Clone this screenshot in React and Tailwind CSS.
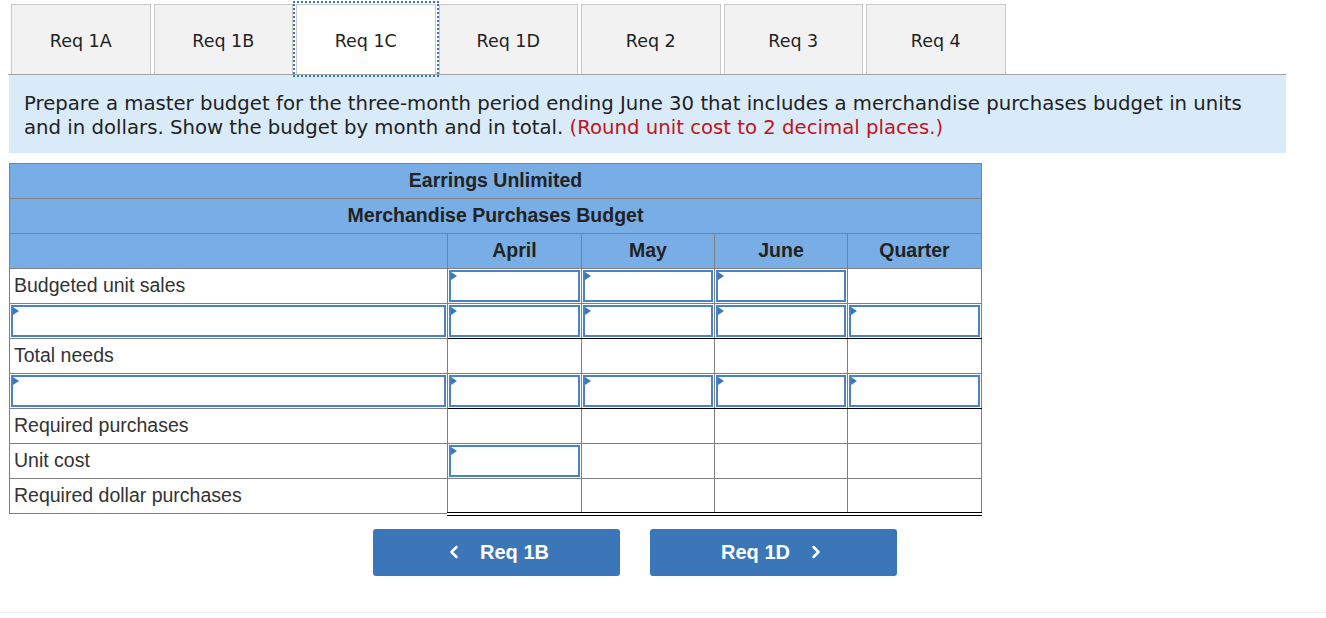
import React from 'react';
import { ChevronLeft, ChevronRight } from 'lucide-react';

const tabs = ['Req 1A', 'Req 1B', 'Req 1C', 'Req 1D', 'Req 2', 'Req 3', 'Req 4'];

const InputCell = () => (
    <div className="relative m-px h-[32px] border-2 border-[#4a82c8] bg-white">
        <span className="absolute left-0 top-0 h-0 w-0 border-y-[4px] border-l-[6px] border-y-transparent border-l-[#3b76c0]" />
    </div>
);

// cells: 'i' = input box, '' = plain; dark = black rule under the row
const rows = [
    { label: 'Budgeted unit sales', cells: ['i', 'i', 'i', ''] },
    { label: null, cells: ['i', 'i', 'i', 'i'], dark: true },
    { label: 'Total needs', cells: ['', '', '', ''] },
    { label: null, cells: ['i', 'i', 'i', 'i'], dark: true },
    { label: 'Required purchases', cells: ['', '', '', ''] },
    { label: 'Unit cost', cells: ['i', '', '', ''], dark: true },
    { label: 'Required dollar purchases', cells: ['', '', '', ''], last: true },
];

const App = () => {
    return (
        <div className="relative h-[618px] w-[1326px] bg-white font-['DejaVu_Sans',Verdana,sans-serif]">
            {/* Tabs */}
            <div className="ml-[8px] flex w-[1278px] gap-[3px] border-b border-[#a3a3a3] pl-[3px] pt-[4px]">
                {tabs.map((t) => (
                    <div
                        key={t}
                        className={
                            t === 'Req 1C'
                                ? 'flex h-[70px] w-[139.5px] items-center justify-center border border-b-0 border-[#c8c8c8] bg-white pt-[3px] text-[17.5px] text-[#222] outline-2 outline-offset-1 outline-dotted outline-[#3b76c0]'
                                : 'flex h-[70px] w-[139.5px] items-center justify-center border border-b-0 border-[#c8c8c8] bg-[#f2f2f2] pt-[3px] text-[17.5px] text-[#222]'
                        }
                    >
                        {t}
                    </div>
                ))}
            </div>

            {/* Instructions */}
            <div className="ml-[9px] w-[1277px] bg-[#d9ebf9] px-[15px] pb-[13px] pt-[17px] text-[19.7px] leading-[24px] text-[#222]">
                Prepare a master budget for the three-month period ending June 30 that includes a merchandise purchases budget in units
                <br />
                and in dollars. Show the budget by month and in total.{' '}
                <span className="text-[#c0131b]">(Round unit cost to 2 decimal places.)</span>
            </div>

            {/* Budget table */}
            <table className="ml-[9px] mt-[10px] w-[972px] table-fixed border-collapse font-['Liberation_Sans',Arial,sans-serif] text-[19.5px]">
                <colgroup>
                    <col className="w-[438px]" />
                    <col className="w-[134px]" />
                    <col className="w-[133px]" />
                    <col className="w-[133px]" />
                    <col className="w-[134px]" />
                </colgroup>
                <thead>
                    <tr className="h-[35px] bg-[#78ade5]">
                        <th colSpan={5} className="border border-[#808080] p-0 font-bold text-[#222]">Earrings Unlimited</th>
                    </tr>
                    <tr className="h-[35px] bg-[#78ade5]">
                        <th colSpan={5} className="border border-[#808080] p-0 font-bold text-[#222]">Merchandise Purchases Budget</th>
                    </tr>
                    <tr className="h-[35px] bg-[#78ade5]">
                        <th className="border border-[#808080] p-0" />
                        <th className="border border-[#808080] p-0 font-bold text-[#222]">April</th>
                        <th className="border border-[#808080] p-0 font-bold text-[#222]">May</th>
                        <th className="border border-[#808080] p-0 font-bold text-[#222]">June</th>
                        <th className="border border-[#808080] p-0 font-bold text-[#222]">Quarter</th>
                    </tr>
                </thead>
                <tbody>
                    {rows.map((r, i) => (
                        <tr key={i} className="h-[35px]">
                            <td className="border border-[#808080] p-0 text-left leading-none text-[#333]">
                                {r.label === null ? <InputCell /> : <span className="pl-[4px]">{r.label}</span>}
                            </td>
                            {r.cells.map((c, j) => (
                                <td
                                    key={j}
                                    className={
                                        r.last
                                            ? 'border border-b-[4px] border-[#808080] border-b-black border-double p-0'
                                            : r.dark
                                            ? 'border border-[#808080] border-b-black p-0'
                                            : 'border border-[#808080] p-0'
                                    }
                                >
                                    {c === 'i' ? <InputCell /> : null}
                                </td>
                            ))}
                        </tr>
                    ))}
                </tbody>
            </table>

            {/* Navigation */}
            <div className="ml-[373px] mt-[13px] flex gap-[30px] font-['Liberation_Sans',Arial,sans-serif]">
                <button className="flex h-[47px] w-[247px] items-center justify-center gap-[16px] rounded-[3px] bg-[#3b76b9] text-[20px] font-bold text-white">
                    <ChevronLeft size={20} strokeWidth={3} />
                    <span>Req 1B</span>
                </button>
                <button className="flex h-[47px] w-[247px] items-center justify-center gap-[16px] rounded-[3px] bg-[#3b76b9] text-[20px] font-bold text-white">
                    <span>Req 1D</span>
                    <ChevronRight size={20} strokeWidth={3} />
                </button>
            </div>

            <div className="absolute bottom-[5px] left-0 h-px w-full bg-[#ececec]" />
        </div>
    );
};

export default App;
